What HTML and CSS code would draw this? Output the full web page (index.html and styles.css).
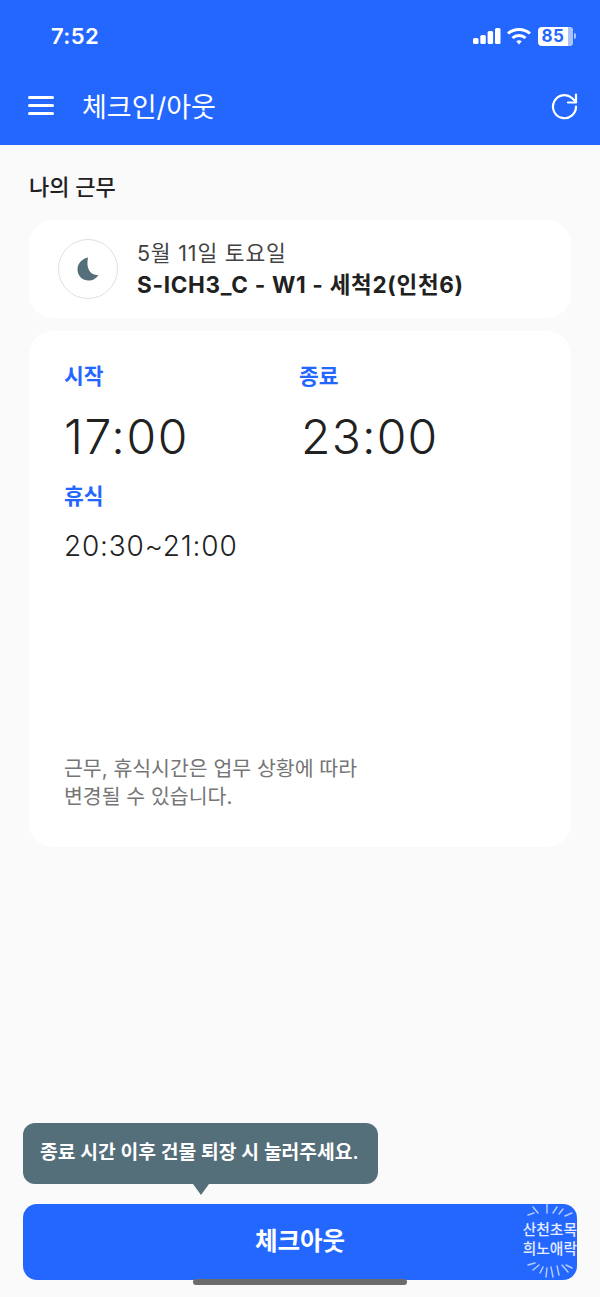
FILE: index.html
```html
<!DOCTYPE html>
<html lang="ko">
<head>
    <meta charset="UTF-8">
    <meta name="viewport" content="width=device-width, initial-scale=1.0">
    <title>체크인/아웃</title>
    <link rel="stylesheet" href="styles.css">
</head>
<body>
<div class="page">
    <div class="top">
        <div class="status">
            <span class="clock">7:52</span>
            <div class="status_icons">
                <svg width="28" height="18" viewBox="0 0 28 18"><g fill="#fff"><rect x="0" y="11" width="5.500" height="6" rx="1.500"/><rect x="7.300" y="8" width="5.500" height="9" rx="1.500"/><rect x="14.600" y="4" width="5.500" height="13" rx="1.500"/><rect x="22" y="1" width="5.500" height="16" rx="1.500"/></g></svg>
                <svg width="24" height="18" viewBox="0 0 24 18"><g fill="none" stroke="#fff" stroke-width="3"><path d="M1 6.500c6-5.500 16-5.500 22 0"/><path d="M5.500 11c3.600-3.300 9.400-3.300 13 0"/></g><path d="M9.300 14.200c1.600-1.300 3.800-1.300 5.400 0L12 17.500z" fill="#fff"/></svg>
                <div class="battery"><div class="battery_body"><span class="battery_num">85</span><span class="battery_rest"></span></div><span class="battery_tip"></span></div>
            </div>
        </div>
        <div class="bar">
            <div class="menu_icon"><span></span><span></span><span></span></div>
            <h1 class="bar_title">체크인/아웃</h1>
            <svg class="reload" width="28" height="28" viewBox="0 0 28 28" fill="none" stroke="#fff" stroke-width="2.200" stroke-linecap="round" stroke-linejoin="round"><path d="M25 14.500a11.500 11.500 0 1 1-4-8.500l4 4"/><path d="M25 2.500v8h-8"/></svg>
        </div>
    </div>

    <div class="main">
        <h2 class="section_title">나의 근무</h2>
        <div class="card shift">
            <div class="shift_icon">
                <svg width="24" height="26" viewBox="0 0 24 26"><path d="M12 1.500C7 2.500 1.500 6.500 1.500 13.500c0 6.500 5 11 11 11 4.500 0 8-2.300 10-5.800-7 1.500-13-5-10.500-17.200z" fill="#546e7a"/></svg>
            </div>
            <div class="shift_text">
                <div class="shift_date">5월 11일 토요일</div>
                <div class="shift_name">S-ICH3_C - W1 - 세척2(인천6)</div>
            </div>
        </div>
        <div class="card times">
            <div class="times_row">
                <div class="times_col">
                    <div class="label">시작</div>
                    <div class="big_time">17:00</div>
                </div>
                <div class="times_col">
                    <div class="label">종료</div>
                    <div class="big_time big_time_end">23:00</div>
                </div>
            </div>
            <div class="label">휴식</div>
            <div class="break_time">20:30~21:00</div>
            <p class="note">근무, 휴식시간은 업무 상황에 따라<br>변경될 수 있습니다.</p>
        </div>

        <div class="bottom">
            <div class="tip">종료 시간 이후 건물 퇴장 시 눌러주세요.</div>
            <div class="check_btn">
                <span class="btn_text">체크아웃</span>
                <div class="sticker">
                    <svg class="burst" width="60" height="76" viewBox="0 0 60 76" fill="none" stroke="#fff" stroke-opacity=".65" stroke-width="1.500" stroke-linecap="round">
                        <path d="M11 11l6-2M16 3l5 6M30 0v9M40 3l-4 6M46 5l-4 5M55 9l-7 3"/>
                        <path d="M11 61l7-2M16 66l6-5M23 69l3-6M29 73l1-9M36 73l-2-10M42 71l-2-9M51 68l-6-7M55 64l-6-3"/>
                    </svg>
                    <span class="sticker_text">산천초목<br>희노애락</span>
                </div>
            </div>
        </div>
    </div>
    <div class="home_bar"></div>
</div>
</body>
</html>
```

FILE: styles.css
```css
*{box-sizing: border-box;}
body{margin: 0;background: #fafafa;font-family: Inter, "Noto Sans CJK KR", sans-serif;color: #212121;}
h1,h2,p{margin: 0;font-weight: normal;}

.page{width: 600px;height: 1297px;position: relative;overflow: hidden;display: flex;flex-direction: column;}

.top{height: 145px;background: #2467ff;color: #fff;flex-shrink: 0;}
.status{height: 72px;padding: 0 24px 0 51px;display: flex;align-items: center;justify-content: space-between;}
.clock{font-size: 22px;font-weight: 600;letter-spacing: 0.4px;}
.status_icons{display: flex;align-items: center;gap: 6px;}
.battery{display: flex;align-items: center;gap: 1px;margin-left: 1px;}
.battery_body{width: 35px;height: 19px;background: #fff;border-radius: 4px;overflow: hidden;display: flex;}
.battery_num{width: 30px;font-size: 17px;line-height: 19px;font-weight: 700;color: #2467ff;text-align: center;letter-spacing: 0.5px;}
.battery_rest{width: 5px;background: #a9c3fa;}
.battery_tip{width: 2px;height: 6px;background: #a9c3fa;border-radius: 0 2px 2px 0;}

.bar{height: 73px;padding: 0 21px 6px 28px;display: flex;align-items: center;}
.menu_icon{width: 26px;display: flex;flex-direction: column;gap: 5px;}
.menu_icon span{height: 3px;background: #fff;border-radius: 2px;}
.bar_title{font-size: 27px;margin-left: 28px;flex: 1;}

.main{flex: 1;padding: 27px 23px 17px;display: flex;flex-direction: column;}
.section_title{font-size: 22px;font-weight: 500;line-height: 30px;margin: 0 0 18px 6px;}

.card{background: #fff;border-radius: 24px;margin: 0 6px;}
.shift{height: 98px;padding: 0 29px;display: flex;align-items: center;gap: 19px;margin-bottom: 13px;}
.shift_icon{width: 60px;height: 60px;border: 1px solid #e0e0e0;border-radius: 50%;display: flex;align-items: center;justify-content: center;}
.shift_date{font-size: 21.500px;line-height: 32px;color: #424242;letter-spacing: 0.8px;margin-top: -1px;}
.shift_name{font-size: 22.500px;font-weight: 700;line-height: 32px;letter-spacing: 0.7px;}

.times{height: 516px;padding: 29px 35px;display: flex;flex-direction: column;}
.times_row{display: flex;}
.times_col{width: 235px;}
.label{font-size: 21.500px;font-weight: 700;line-height: 32px;color: #2467ff;}
.big_time{font-size: 48px;font-weight: 350;line-height: 58px;margin-top: 16px;margin-bottom: 14px;letter-spacing: 1.600px;}
.big_time_end{margin-left: 2px;letter-spacing: 1.200px;}
.break_time{font-size: 28px;font-weight: 350;line-height: 36px;margin-top: 16px;letter-spacing: 0.800px;}
.note{margin-top: auto;font-size: 20.500px;line-height: 28px;color: #757575;padding-bottom: 7px;}

.bottom{margin-top: auto;display: flex;flex-direction: column;align-items: flex-start;}
.tip{position: relative;height: 61px;width: 355px;padding-left: 17px;background: #546e7a;border-radius: 12px;color: #fff;font-size: 19.250px;font-weight: 600;line-height: 58px;margin-bottom: 20px;white-space: nowrap;}
.tip::after{content: "";position: absolute;left: 170px;top: 100%;border: 8px solid transparent;border-top: 11px solid #546e7a;border-bottom: 0;}
.check_btn{position: relative;width: 554px;height: 76px;padding-bottom: 5px;background: #2467ff;border-radius: 14px;color: #fff;font-size: 24.500px;font-weight: 700;display: flex;align-items: center;justify-content: center;overflow: hidden;}
.sticker{position: absolute;right: 0;top: 0;width: 60px;height: 76px;padding-bottom: 4px;display: flex;align-items: center;justify-content: flex-end;}
.burst{position: absolute;right: 0;top: 0;}
.sticker_text{font-size: 14.750px;font-weight: 500;line-height: 19px;text-align: right;white-space: nowrap;color: #e6edff;position: relative;}

.home_bar{position: absolute;left: 193px;top: 1279px;width: 214px;height: 6px;background: #6b6b6b;border-radius: 3px;}
```
